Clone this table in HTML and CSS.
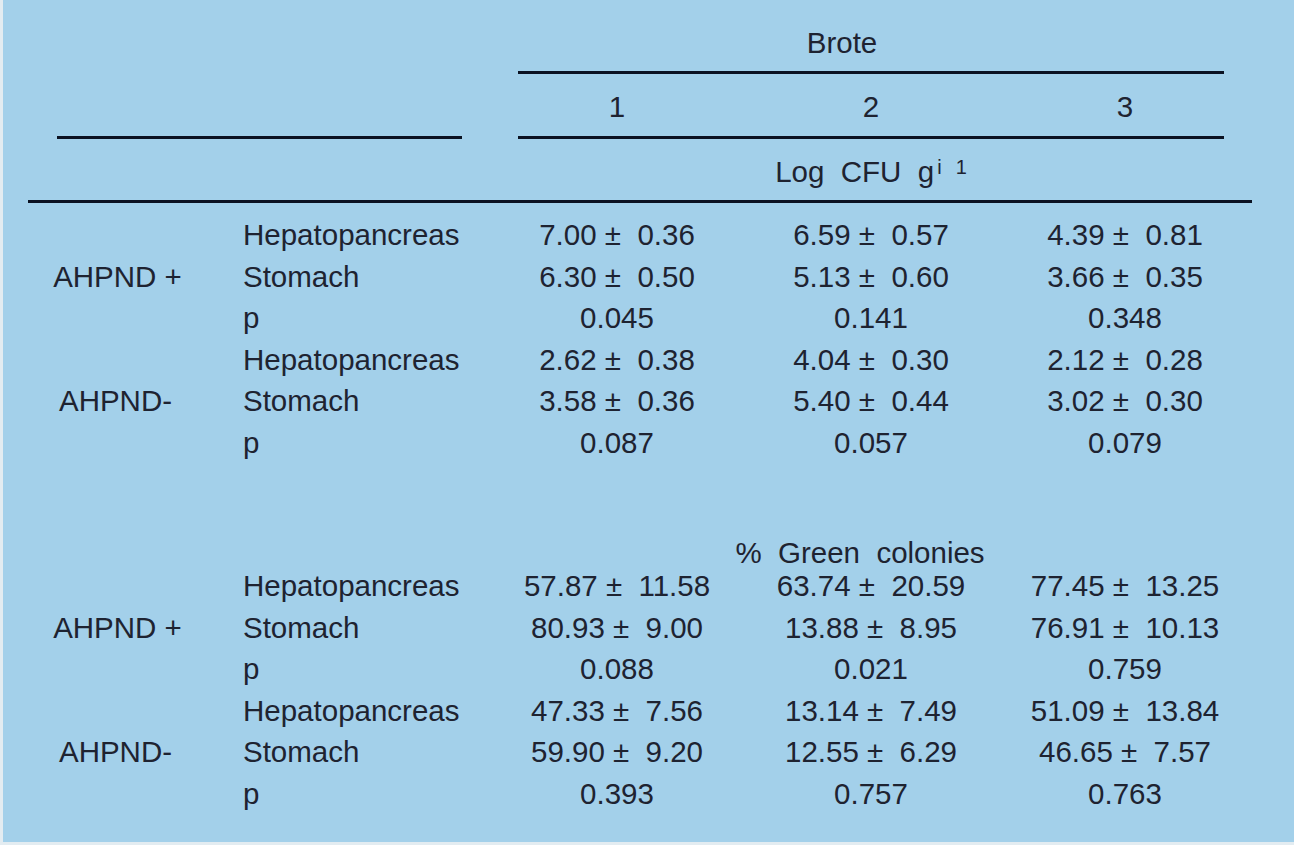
FILE: index.html
```html
<!DOCTYPE html>
<html lang="en">
<head>
<meta charset="utf-8">
<title>Brote table</title>
<link rel="stylesheet" href="styles.css">
</head>
<body>
<div class="sheet">
  <div class="row head-a">
    <div class="brote">Brote</div>
  </div>
  <div class="row head-b">
    <div class="stub-rule"></div>
    <div class="num n1">1</div>
    <div class="num n2">2</div>
    <div class="num n3">3</div>
  </div>
  <div class="row head-c">
    <div class="unit">Log  CFU  g<span class="sup sup-i">i</span><span class="sup sup-1">1</span></div>
  </div>

  <div class="group first">
    <div class="g-label">AHPND +</div>
    <div class="org">Hepatopancreas</div><div class="v">7.00 ±  0.36</div><div class="v">6.59 ±  0.57</div><div class="v">4.39 ±  0.81</div>
    <div class="org">Stomach</div><div class="v">6.30 ±  0.50</div><div class="v">5.13 ±  0.60</div><div class="v">3.66 ±  0.35</div>
    <div class="org">p</div><div class="v">0.045</div><div class="v">0.141</div><div class="v">0.348</div>
  </div>
  <div class="group">
    <div class="g-label minus">AHPND-</div>
    <div class="org">Hepatopancreas</div><div class="v">2.62 ±  0.38</div><div class="v">4.04 ±  0.30</div><div class="v">2.12 ±  0.28</div>
    <div class="org">Stomach</div><div class="v">3.58 ±  0.36</div><div class="v">5.40 ±  0.44</div><div class="v">3.02 ±  0.30</div>
    <div class="org">p</div><div class="v">0.087</div><div class="v">0.057</div><div class="v">0.079</div>
  </div>

  <div class="row green-head">
    <div class="green">%  Green  colonies</div>
  </div>

  <div class="group">
    <div class="g-label">AHPND +</div>
    <div class="org">Hepatopancreas</div><div class="v">57.87 ±  11.58</div><div class="v">63.74 ±  20.59</div><div class="v">77.45 ±  13.25</div>
    <div class="org">Stomach</div><div class="v">80.93 ±  9.00</div><div class="v">13.88 ±  8.95</div><div class="v">76.91 ±  10.13</div>
    <div class="org">p</div><div class="v">0.088</div><div class="v">0.021</div><div class="v">0.759</div>
  </div>
  <div class="group">
    <div class="g-label minus">AHPND-</div>
    <div class="org">Hepatopancreas</div><div class="v">47.33 ±  7.56</div><div class="v">13.14 ±  7.49</div><div class="v">51.09 ±  13.84</div>
    <div class="org">Stomach</div><div class="v">59.90 ±  9.20</div><div class="v">12.55 ±  6.29</div><div class="v">46.65 ±  7.57</div>
    <div class="org">p</div><div class="v">0.393</div><div class="v">0.757</div><div class="v">0.763</div>
  </div>
</div>
</body>
</html>
```

FILE: styles.css
```css
* {
  box-sizing: border-box;
}

html, body {
  margin: 0;
  padding: 0;
}

body {
  width: 1294px;
  height: 845px;
  background: #e3ecf1;
  font-family: "Liberation Sans", Arial, sans-serif;
  font-size: 29.5px;
  color: #1e2331;
  overflow: hidden;
}

.sheet {
  margin-left: 3px;
  width: 1291px;
  height: 842px;
  background: #a3d0ea;
  padding-left: 25px;
  overflow: hidden;
}

.row,
.group {
  display: grid;
  grid-template-columns: 215px 247px 254px 254px 254px;
  width: 1224px;
}

/* header row A */
.brote {
  grid-column: 3 / 6;
  margin: 0 28px;
  padding: 23px 58px 8px 0;
  line-height: 40px;
  text-align: center;
  border-bottom: 3px solid #0b1222;
}

/* header row B */
.stub-rule {
  grid-column: 1 / 3;
  margin: 0 28px 0 29px;
  border-bottom: 3px solid #0b1222;
}

.num {
  padding: 13px 0 9px;
  line-height: 40px;
  text-align: center;
  border-bottom: 3px solid #0b1222;
}

.n1 {
  margin-left: 28px;
  padding-right: 28px;
}

.n3 {
  margin-right: 28px;
  padding-left: 28px;
}

/* header row C */
.head-c {
  border-bottom: 3px solid #0b1222;
}

.unit {
  grid-column: 3 / 6;
  padding: 13px 0 8px;
  line-height: 40px;
  text-align: center;
  white-space: pre;
}

.sup {
  font-size: 20px;
  line-height: 0;
  vertical-align: 8px;
}

.sup-i {
  margin-left: 3px;
}

.sup-1 {
  margin-left: 14px;
}

/* body groups */
.group {
  grid-template-rows: repeat(3, 41.5px);
  line-height: 41.5px;
}

.group.first {
  margin-top: 11.25px;
}

.g-label {
  grid-column: 1;
  grid-row: 1 / 4;
  align-self: center;
  text-align: center;
  padding-right: 36px;
  white-space: pre;
}

.g-label.minus {
  padding-right: 40px;
}

.org {
  grid-column: 2;
}

.v {
  text-align: center;
  white-space: pre;
}

/* green colonies header */
.green-head {
  margin-top: 77.75px;
}

.green {
  grid-column: 3 / 6;
  height: 24px;
  line-height: 24px;
  padding-right: 22px;
  text-align: center;
  white-space: pre;
}
```
